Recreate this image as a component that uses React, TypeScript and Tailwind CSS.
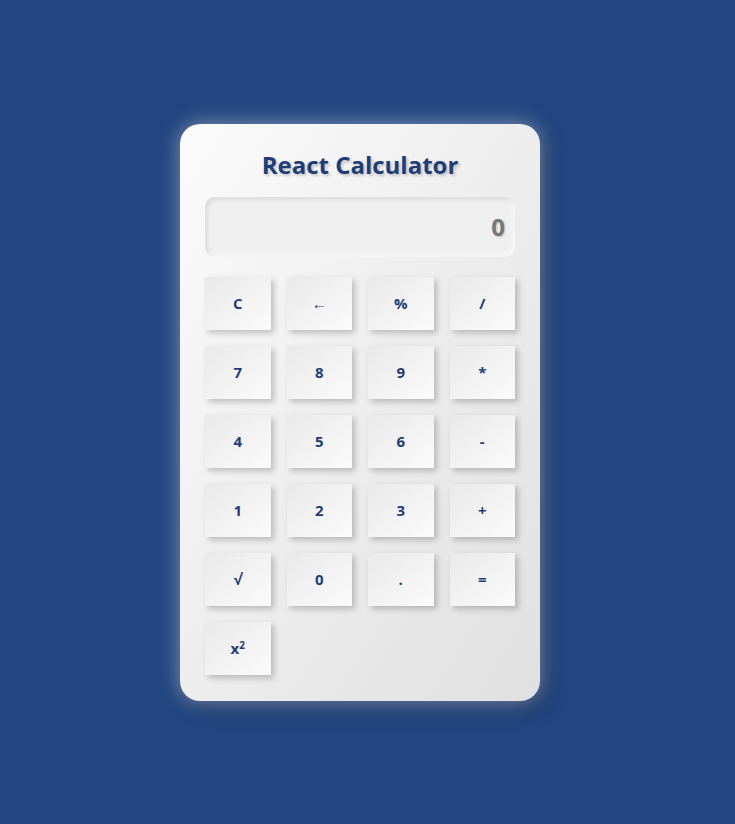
const KEYS = ["C", "←", "%", "/", "7", "8", "9", "*", "4", "5", "6", "-", "1", "2", "3", "+", "√", "0", ".", "=", "x²"];

function Key({ label }: { label: string }) {
  const content =
    label === "x²" ? (
      <span>
        x<sup className="text-[10px]">2</sup>
      </span>
    ) : label === "←" ? (
      <span className="font-normal">{label}</span>
    ) : (
      label
    );
  return (
    <button className="flex h-[53px] items-center justify-center bg-gradient-to-br from-[#e9e9e9] to-[#fbfbfb] text-[15px] font-bold text-[#1f3d75] shadow-[3px_3px_6px_rgba(0,0,0,0.22)]">
      {content}
    </button>
  );
}

export default function App() {
  return (
    <div className="flex min-h-screen items-start justify-center bg-[#234680] pt-[124px] pr-[15px] font-['Open_Sans',sans-serif]">
      <div className="w-[360px] rounded-[20px] bg-gradient-to-br from-[#fbfbfb] to-[#e0e0e0] px-[25px] pt-[25px] pb-[26px] shadow-[0_0_20px_rgba(255,255,255,0.45),8px_8px_20px_rgba(0,0,0,0.25)]">
        <h1 className="mb-4 text-center text-2xl leading-8 font-bold text-[#1f3d75] [text-shadow:2px_2px_3px_rgba(0,0,0,0.2)]">
          React Calculator
        </h1>
        <div className="mb-5 flex h-[60px] items-center justify-end rounded-[10px] bg-[#efefef] px-[10px] text-2xl font-bold text-[#777] shadow-[inset_2px_2px_5px_rgba(0,0,0,0.1),inset_-2px_-2px_5px_rgba(255,255,255,0.8)] [text-shadow:1px_1px_2px_rgba(0,0,0,0.2)]">
          0
        </div>
        <div className="grid grid-cols-4 gap-4">
          {KEYS.map((k) => (
            <Key key={k} label={k} />
          ))}
        </div>
      </div>
    </div>
  );
}
